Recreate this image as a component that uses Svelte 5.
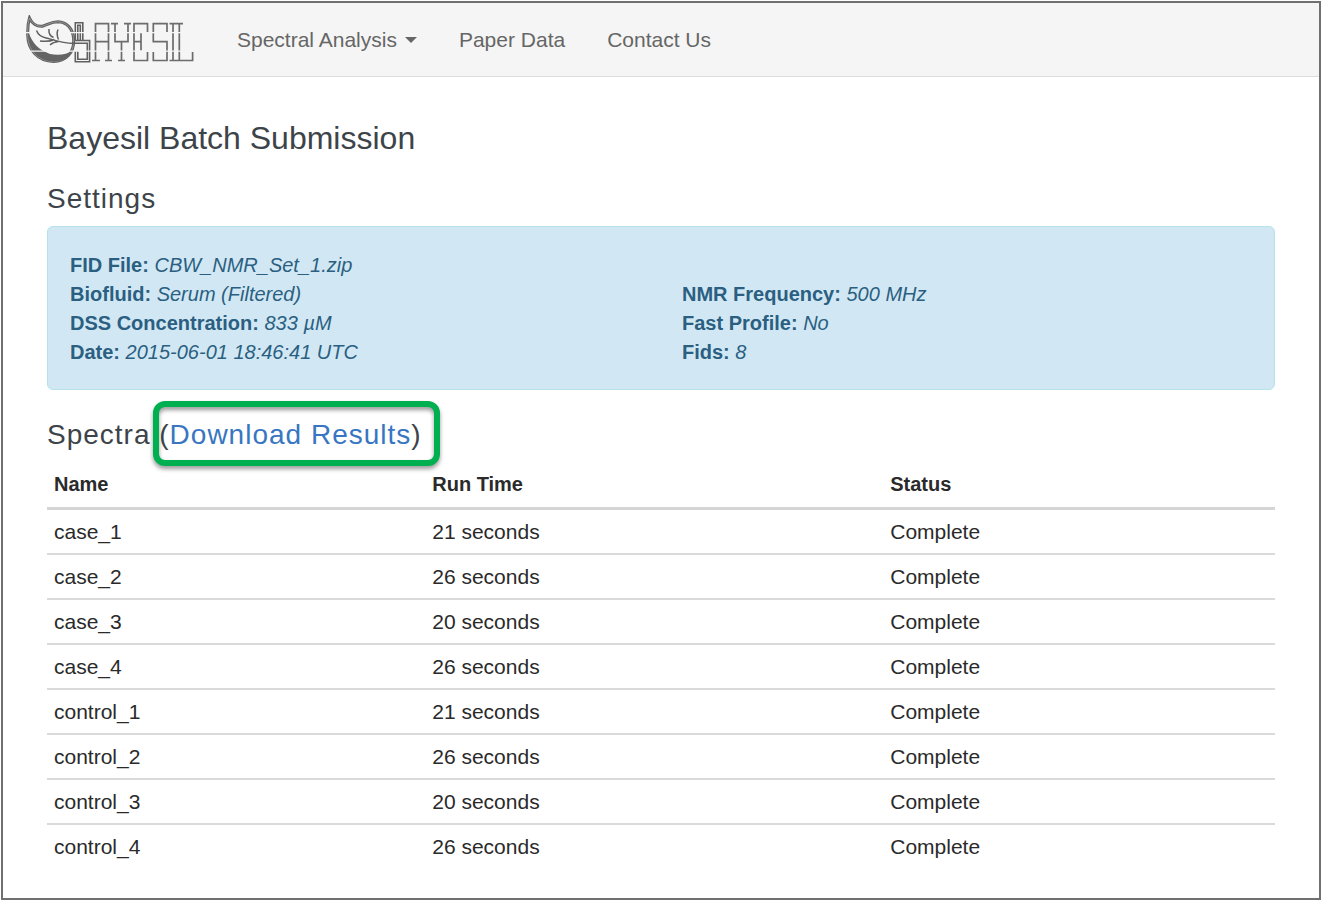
<script>
  const details = [
    [
      ['FID File:', 'CBW_NMR_Set_1.zip'],
      ['Biofluid:', 'Serum (Filtered)'],
      ['DSS Concentration:', '833 µM'],
      ['Date:', '2015-06-01 18:46:41 UTC']
    ],
    [
      ['NMR Frequency:', '500 MHz'],
      ['Fast Profile:', 'No'],
      ['Fids:', '8']
    ]
  ];

  const spectra = [
    ['case_1', 21],
    ['case_2', 26],
    ['case_3', 20],
    ['case_4', 26],
    ['control_1', 21],
    ['control_2', 26],
    ['control_3', 20],
    ['control_4', 26]
  ];
</script>

<div class="page">
  <nav>
    <a class="logo" href="#home" aria-label="Bayesil">
      <svg width="170" height="50" viewBox="25 14 170 50" fill="none" stroke="#606060" stroke-width="1.6" aria-hidden="true">
        <!-- leaf -->
        <path d="M29.5 17C32 22.5 37 25.8 42.5 25.2C48 23.5 51.5 20.8 58 20.8C67 21 73.3 28 73.7 39C74 52 66 60.4 53.5 60.4C38 60.4 27.9 49 27.7 34C27.5 27 28 22 29.5 17Z" stroke-width="3" />
        <path d="M29.5 17C32 22.5 37 25.8 42.5 25.2C48 23.5 51.5 20.8 58 20.8C67 21 73.3 28 73.7 39C74 52 66 60.4 53.5 60.4C38 60.4 27.9 49 27.7 34C27.5 27 28 22 29.5 17Z" stroke="#b5b5b5" stroke-width="0.6" />
        <path d="M28.5 31C32 42 39 49 50 53C59 54.5 67 53.5 72 50C69 57 62 60.5 54 60.5C38 60.5 28 48 28.5 31Z" fill="#646464" stroke="none" />
        <path d="M36.5 29.5C38 33.5 41.5 36 46 37C53 38.5 60 42 74 42.4M40 40C46 40.8 50 40.7 54.5 38.5M50 44C52.5 41.5 55 40.8 58.5 40.5M49 28C48.5 32 50 35 53.5 36.5M58 28.5C56.5 32 57 35 58.5 38.5" stroke-width="1.5" />
        <!-- double-lined first letter -->
        <path d="M75.3 39.5V21.7H82.8V39.5H89.6V60.7H75.3V50M75.3 39.5H82.8M72 42.2H87.3V58.2H77.8V50M77.8 39V24.2H80.3V39" />
        <!-- segmented lettering -->
        <g stroke="#6c6c6c" stroke-width="1.7">
          <path d="M95.5 59.5V22.6H108.5V59.5M95.5 40.6H108.5M92 59.5H100M105 59.5H112" />
          <path d="M111 22.6H118M124 22.6H131M115 22.6V40.6H128V22.6M121.5 40.6V59.5M118 59.5H125" />
          <path d="M147.5 31V22.6H134V59.5H147.5V51M134 40.6H141M141 32V49.5" />
          <path d="M167 31V22.6H153.3V40.6H167V59.5H153.3V51" />
          <path d="M169.5 22.6H183M173 22.6V59.5M179.3 22.6V59.5M169.5 59.5H192.6V51" />
        </g>
        <path d="M25 31.6H31M70 31.6H195M25 50.2H195" stroke="#f5f5f5" stroke-width="1.2" />
      </svg>
    </a>
    <a href="#analysis">Spectral Analysis <span class="caret"></span></a>
    <a href="#data">Paper Data</a>
    <a href="#contact">Contact Us</a>
  </nav>

  <main>
    <h1>Bayesil Batch Submission</h1>
    <h2>Settings</h2>
    <section class="settings">
      {#each details as column}
        <div>
          {#each column as [label, value]}
            <p><strong>{label}</strong> <em>{value}</em></p>
          {/each}
        </div>
      {/each}
    </section>

    <h2>Spectra <span class="download">(<a href="#download">Download Results</a>)</span></h2>
    <table>
      <thead>
        <tr><th class="name">Name</th><th class="time">Run Time</th><th>Status</th></tr>
      </thead>
      <tbody>
        {#each spectra as [name, seconds]}
          <tr><td>{name}</td><td>{seconds} seconds</td><td>Complete</td></tr>
        {/each}
      </tbody>
    </table>
  </main>
</div>

<style>
  :global(body) {
    margin: 0;
    padding: 1px;
    background: #fff;
  }

  .page {
    box-sizing: border-box;
    min-height: calc(100vh - 2px);
    border: 2px solid #707070;
    font: 21px/29px 'Liberation Sans', Arial, sans-serif;
    color: #2a2a2a;
  }

  a {
    color: #3876c2;
    text-decoration: none;
  }

  nav {
    display: flex;
    align-items: center;
    gap: 42px;
    min-height: 73px;
    padding-left: 22px;
    background: #f5f5f5;
    border-bottom: 1px solid #dcdcdc;
  }

  nav a {
    display: flex;
    align-items: center;
    gap: 8px;
    color: #666;
  }

  .logo svg {
    display: block;
  }

  .caret {
    border: 6px solid transparent;
    border-top-color: #666;
    border-bottom: 0;
  }

  main {
    padding: 39px 44px 24px;
  }

  h1,
  h2 {
    margin: 0;
    color: #3d4449;
    font-weight: 500;
  }

  h1 {
    font-size: 32px;
    line-height: 44px;
  }

  h2 {
    padding: 20px 0 9px;
    font-size: 28px;
    line-height: 37px;
    letter-spacing: 1px;
  }

  .settings {
    display: grid;
    grid-template-columns: 1fr 1fr;
    column-gap: 20px;
    align-items: end;
    margin-bottom: 6px;
    padding: 24px 0 22px 22px;
    background: #d1e8f4;
    border: 1px solid #b7e2ea;
    border-radius: 6px;
    color: #2b5f81;
    font-size: 20px;
  }

  .settings p {
    margin: 0;
  }

  .download {
    position: relative;
  }

  .download::after {
    content: '';
    position: absolute;
    inset: -18px -18px -16px -6px;
    border: 6px solid #00b050;
    border-radius: 12px;
    filter: drop-shadow(0 3px 2px rgb(0 0 0 / 40%));
    pointer-events: none;
  }

  table {
    width: 100%;
    margin-top: 1px;
    table-layout: fixed;
    border-collapse: separate;
    border-spacing: 0;
  }

  .name {
    width: 30.8%;
  }

  .time {
    width: 37.3%;
  }

  th,
  td {
    box-sizing: border-box;
    padding: 7px;
    text-align: left;
  }

  th {
    padding-bottom: 8px;
    border-bottom: 3px solid #d5d5d5;
    font-size: 20px;
  }

  td {
    border-bottom: 2px solid #dadada;
  }

  tr:last-child td {
    border-bottom: 0;
  }
</style>
